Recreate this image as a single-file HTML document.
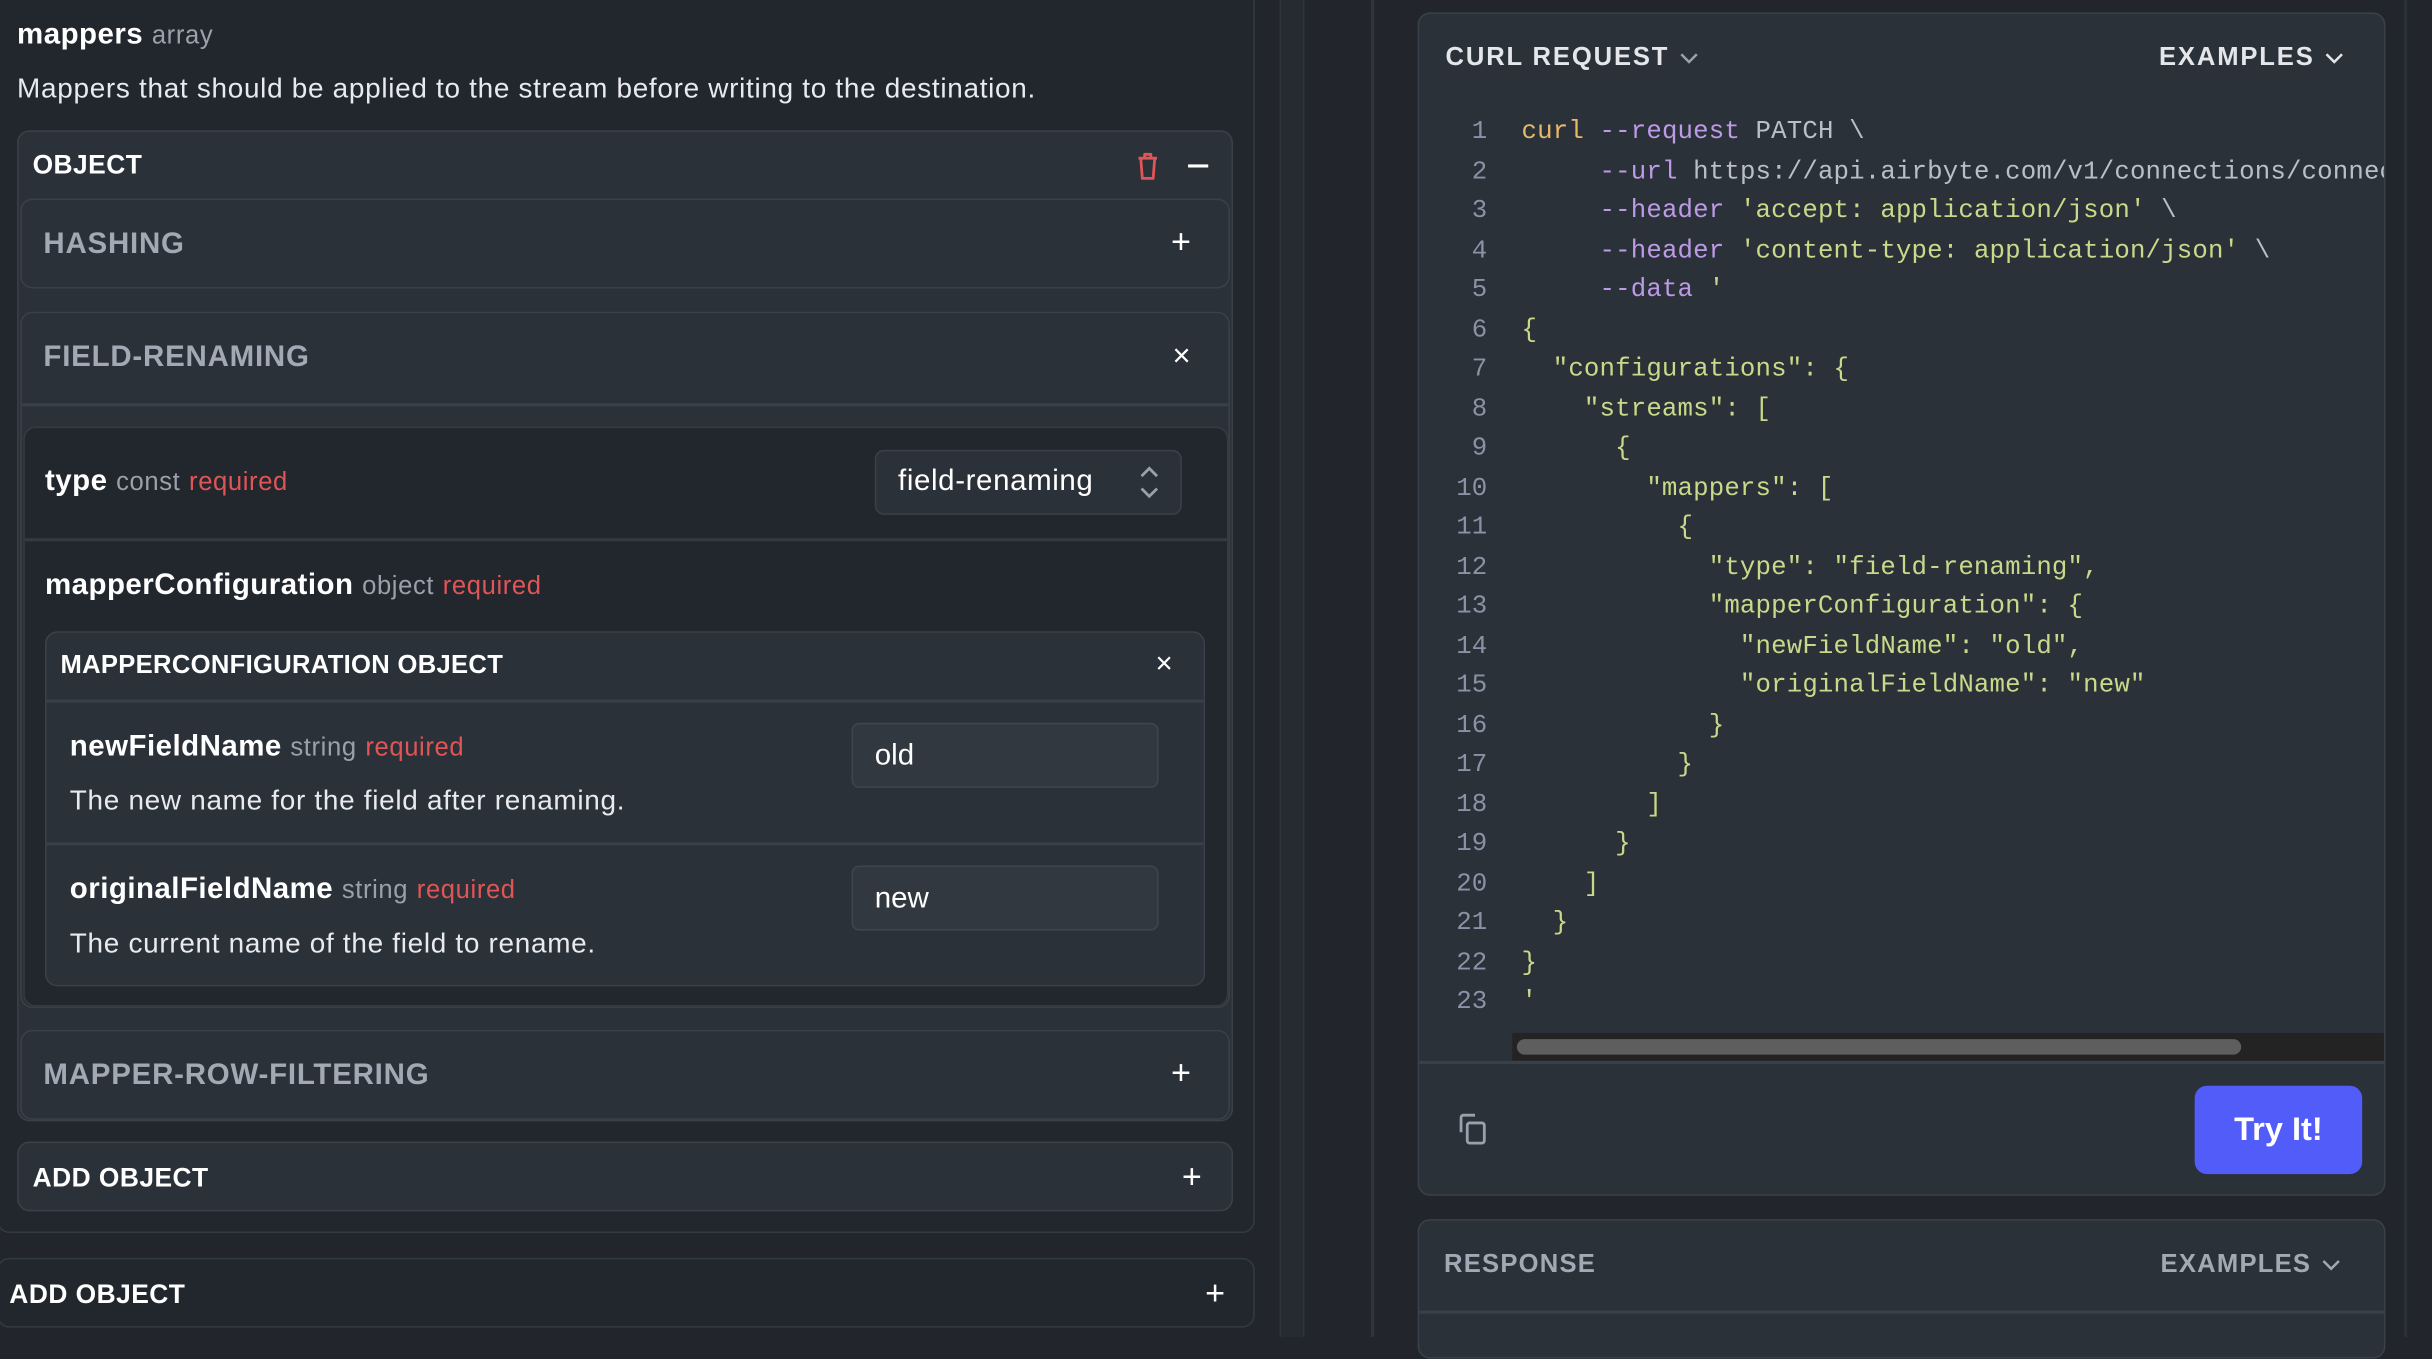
<!DOCTYPE html>
<html><head><meta charset="utf-8"><style>
html,body{margin:0;padding:0;width:2432px;height:1336px;overflow:hidden;background:#22262c}
#w{position:absolute;left:0;top:0;width:1568px;height:862px;transform:scale(1.5510);transform-origin:0 0;font-family:"Liberation Sans",sans-serif;color:#fff}
.a{position:absolute;box-sizing:border-box}
.card{background:#2b3139;border:1.5px solid #3a4049;border-radius:8px}
.dark{background:#22262d}
.h{font-weight:bold;font-size:17px;letter-spacing:.3px}
.lb{font-size:19px;font-weight:bold;letter-spacing:.3px}
.lb span{font-weight:normal;font-size:16.5px;letter-spacing:.4px}
.d{font-size:18px;letter-spacing:.45px;color:#e8eaee}
.g{color:#9aa1ad}
.r{color:#e05555}
.ln{position:absolute;left:0;width:44px;text-align:right;color:#8a92a6}
.code{font-family:"Liberation Mono","DejaVu Sans Mono",monospace;font-size:16.6px;letter-spacing:.1px}
.cl{position:absolute;left:66px;white-space:pre}
.y{color:#e6b86a}.p{color:#bd9ae6}.t{color:#b9bfca}.s{color:#c9d98a}
.chev{display:inline-block;vertical-align:middle;margin-left:6px}
</style></head><body><div id="w">
<div class="a dark" style="left:-2px;top:-10px;width:811px;height:805px;border:1.5px solid #343a42;border-radius:8px"></div>
<div class="a lb" style="left:11px;top:12px">mappers <span class="g">array</span></div>
<div class="a d" style="left:11px;top:47px">Mappers that should be applied to the stream before writing to the destination.</div>
<div class="a card" style="left:11px;top:84px;width:784px;height:639px"></div>
<div class="a h" style="left:21px;top:97px">OBJECT</div>
<svg class="a" style="left:731px;top:97px" width="18" height="20" viewBox="0 0 18 20"><path d="M3 5h12M7 5V2.5h4V5M4.5 5l1 13h7l1-13" fill="none" stroke="#e05555" stroke-width="1.8" stroke-linejoin="round"/></svg>
<div class="a" style="left:766px;top:106px;width:13px;height:2px;background:#fff"></div>
<div class="a card" style="left:13px;top:128px;width:780px;height:58px"></div>
<div class="a" style="left:28px;top:147px;font-size:19px;font-weight:bold;color:#a3a9b4;letter-spacing:.5px">HASHING</div>
<div class="a" style="left:755px;top:143px;font-size:22px">+</div>
<div class="a card" style="left:13px;top:201px;width:780px;height:449px"></div>
<div class="a" style="left:14px;top:260px;width:778px;height:1.5px;background:#3a4049"></div>
<div class="a" style="left:28px;top:220px;font-size:19px;font-weight:bold;color:#a3a9b4;letter-spacing:.5px">FIELD-RENAMING</div>
<div class="a" style="left:756px;top:219px;font-size:20px">×</div>
<div class="a dark" style="left:15px;top:275px;width:777px;height:374px;border:1.5px solid #343a42;border-radius:8px"></div>
<div class="a" style="left:16px;top:347px;width:775px;height:1.5px;background:#343a42"></div>
<div class="a lb" style="left:29px;top:300px">type <span class="g">const</span> <span class="r">required</span></div>
<div class="a card" style="left:564px;top:290px;width:198px;height:42px;border-radius:6px"></div>
<div class="a" style="left:579px;top:300px;font-size:19px;letter-spacing:.4px">field-renaming</div>
<svg class="a" style="left:733px;top:299px" width="16" height="24" viewBox="0 0 16 24"><path d="M3 8l5-5 5 5M3 16l5 5 5-5" fill="none" stroke="#9aa1ad" stroke-width="1.8"/></svg>
<div class="a lb" style="left:29px;top:367px">mapperConfiguration <span class="g">object</span> <span class="r">required</span></div>
<div class="a card" style="left:29px;top:407px;width:748px;height:229px"></div>
<div class="a" style="left:30px;top:451px;width:746px;height:1.5px;background:#3a4049"></div>
<div class="a" style="left:30px;top:543px;width:746px;height:1.5px;background:#3a4049"></div>
<div class="a h" style="left:39px;top:420px;font-size:16.5px;letter-spacing:.2px">MAPPERCONFIGURATION OBJECT</div>
<div class="a" style="left:745px;top:418px;font-size:19px">×</div>
<div class="a lb" style="left:45px;top:471px">newFieldName <span class="g">string</span> <span class="r">required</span></div>
<div class="a d" style="left:45px;top:506px">The new name for the field after renaming.</div>
<div class="a" style="left:549px;top:466px;width:198px;height:42px;background:#313840;border:1.5px solid #3e454e;border-radius:5px"></div>
<div class="a" style="left:564px;top:477px;font-size:19px">old</div>
<div class="a lb" style="left:45px;top:563px">originalFieldName <span class="g">string</span> <span class="r">required</span></div>
<div class="a d" style="left:45px;top:598px">The current name of the field to rename.</div>
<div class="a" style="left:549px;top:558px;width:198px;height:42px;background:#313840;border:1.5px solid #3e454e;border-radius:5px"></div>
<div class="a" style="left:564px;top:569px;font-size:19px">new</div>
<div class="a card" style="left:13px;top:664px;width:780px;height:58px"></div>
<div class="a" style="left:28px;top:683px;font-size:19px;font-weight:bold;color:#a3a9b4;letter-spacing:.5px">MAPPER-ROW-FILTERING</div>
<div class="a" style="left:755px;top:679px;font-size:22px">+</div>
<div class="a card" style="left:11px;top:736px;width:784px;height:45px"></div>
<div class="a h" style="left:21px;top:750px">ADD OBJECT</div>
<div class="a" style="left:762px;top:746px;font-size:22px">+</div>
<div class="a dark" style="left:-2px;top:811px;width:811px;height:45px;border:1.5px solid #343a42;border-radius:8px"></div>
<div class="a h" style="left:6px;top:825px">ADD OBJECT</div>
<div class="a" style="left:777px;top:821px;font-size:22px">+</div>
<div class="a" style="left:825px;top:0;width:16px;height:862px;background:#262a31;border-left:1.5px solid #30353d;border-right:1.5px solid #30353d"></div>
<div class="a" style="left:884px;top:0;width:1.5px;height:862px;background:#30353d"></div>
<div class="a" style="left:1550px;top:0;width:1.5px;height:862px;background:#2c3138"></div>
<div class="a card" style="left:914px;top:8px;width:624px;height:763px;overflow:hidden">
 <div class="a h" style="left:17px;top:19px;font-size:16.5px;letter-spacing:1.2px;color:#e4e6ea">CURL REQUEST<svg class="chev" width="14" height="10" viewBox="0 0 14 10"><path d="M2 2l5 5 5-5" fill="none" stroke="#9aa1ad" stroke-width="1.6"/></svg></div>
 <div class="a h" style="left:477px;top:19px;font-size:16.5px;letter-spacing:1.2px;color:#e4e6ea">EXAMPLES<svg class="chev" width="14" height="10" viewBox="0 0 14 10"><path d="M2 2l5 5 5-5" fill="none" stroke="#e4e6ea" stroke-width="1.6"/></svg></div>
 <div class="a code" style="left:0;top:66px;width:624px;height:600px">
 <div class="ln" style="top:0">1</div><div class="cl" style="top:0"><span class="y">curl</span> <span class="p">--request</span> <span class="t">PATCH \</span></div>
 <div class="ln" style="top:25.5px">2</div><div class="cl" style="top:25.5px">     <span class="p">--url</span> <span class="t">https://api.airbyte.com/v1/connections/connectionId \</span></div>
 <div class="ln" style="top:51px">3</div><div class="cl" style="top:51px">     <span class="p">--header</span> <span class="s">'accept: application/json'</span> <span class="t">\</span></div>
 <div class="ln" style="top:76.5px">4</div><div class="cl" style="top:76.5px">     <span class="p">--header</span> <span class="s">'content-type: application/json'</span> <span class="t">\</span></div>
 <div class="ln" style="top:102px">5</div><div class="cl" style="top:102px">     <span class="p">--data</span> <span class="s">'</span></div>
 <div class="ln" style="top:127.5px">6</div><div class="cl s" style="top:127.5px">{</div>
 <div class="ln" style="top:153px">7</div><div class="cl s" style="top:153px">  "configurations": {</div>
 <div class="ln" style="top:178.5px">8</div><div class="cl s" style="top:178.5px">    "streams": [</div>
 <div class="ln" style="top:204px">9</div><div class="cl s" style="top:204px">      {</div>
 <div class="ln" style="top:229.5px">10</div><div class="cl s" style="top:229.5px">        "mappers": [</div>
 <div class="ln" style="top:255px">11</div><div class="cl s" style="top:255px">          {</div>
 <div class="ln" style="top:280.5px">12</div><div class="cl s" style="top:280.5px">            "type": "field-renaming",</div>
 <div class="ln" style="top:306px">13</div><div class="cl s" style="top:306px">            "mapperConfiguration": {</div>
 <div class="ln" style="top:331.5px">14</div><div class="cl s" style="top:331.5px">              "newFieldName": "old",</div>
 <div class="ln" style="top:357px">15</div><div class="cl s" style="top:357px">              "originalFieldName": "new"</div>
 <div class="ln" style="top:382.5px">16</div><div class="cl s" style="top:382.5px">            }</div>
 <div class="ln" style="top:408px">17</div><div class="cl s" style="top:408px">          }</div>
 <div class="ln" style="top:433.5px">18</div><div class="cl s" style="top:433.5px">        ]</div>
 <div class="ln" style="top:459px">19</div><div class="cl s" style="top:459px">      }</div>
 <div class="ln" style="top:484.5px">20</div><div class="cl s" style="top:484.5px">    ]</div>
 <div class="ln" style="top:510px">21</div><div class="cl s" style="top:510px">  }</div>
 <div class="ln" style="top:535.5px">22</div><div class="cl s" style="top:535.5px">}</div>
 <div class="ln" style="top:561px">23</div><div class="cl s" style="top:561px">'</div>
 </div>
 <div class="a" style="left:60px;top:657px;width:564px;height:18px;background:#232323"></div>
 <div class="a" style="left:63px;top:661px;width:467px;height:10px;background:#5e5e5e;border-radius:5px"></div>
 <div class="a" style="left:0;top:675px;width:624px;height:1.5px;background:#3a4049"></div>
 <svg class="a" style="left:23px;top:707px" width="24" height="24" viewBox="0 0 24 24"><path d="M4 14V4.5a1.5 1.5 0 0 1 1.5-1.5H13" fill="none" stroke="#9aa1ad" stroke-width="1.8"/><rect x="8" y="8" width="11" height="13" rx="1.5" fill="none" stroke="#9aa1ad" stroke-width="1.8"/></svg>
 <div class="a" style="left:500px;top:691px;width:108px;height:57px;background:#525cf9;border-radius:8px;font-size:21px;font-weight:bold;text-align:center;line-height:57px">Try It!</div>
</div>
<div class="a card" style="left:914px;top:786px;width:624px;height:90px"></div>
<div class="a" style="left:915px;top:845px;width:622px;height:1.5px;background:#3a4049"></div>
<div class="a h" style="left:931px;top:806px;font-size:16.5px;letter-spacing:.8px;color:#a3a9b4">RESPONSE</div>
<div class="a h" style="left:1393px;top:806px;font-size:16.5px;letter-spacing:.8px;color:#a3a9b4">EXAMPLES<svg class="chev" width="14" height="10" viewBox="0 0 14 10"><path d="M2 2l5 5 5-5" fill="none" stroke="#a3a9b4" stroke-width="1.6"/></svg></div>
</div></body></html>
